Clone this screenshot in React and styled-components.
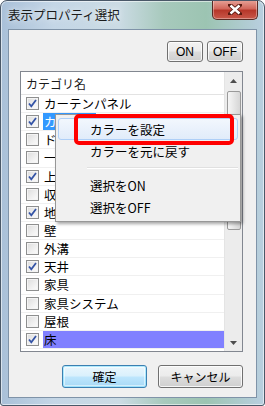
import React from "react";
import styled, { createGlobalStyle, css } from "styled-components";

const GlobalStyle = createGlobalStyle`
  body {
    margin: 0;
    background: #ffffff;
    font-family: "Noto Sans CJK JP", "Noto Sans", sans-serif;
    font-size: 12px;
    color: #000;
  }
`;

const items = [
  { name: "カーテンパネル", checked: true },
  { name: "カーテン", checked: true, selected: true },
  { name: "ドア", checked: false },
  { name: "一般", checked: false },
  { name: "上部", checked: true },
  { name: "収納", checked: false },
  { name: "地面", checked: true },
  { name: "壁", checked: false },
  { name: "外溝", checked: false },
  { name: "天井", checked: true },
  { name: "家具", checked: false },
  { name: "家具システム", checked: false },
  { name: "屋根", checked: false },
  { name: "床", checked: true, current: true },
];

const menuItems = [
  { label: "カラーを設定", hover: true },
  { label: "カラーを元に戻す" },
  { sep: true },
  { label: "選択をON" },
  { label: "選択をOFF" },
];

const Window = styled.div`
  position: relative;
  width: 265px;
  height: 406px;
  box-sizing: border-box;
  border: 1px solid #4a5868;
  border-radius: 7px 7px 3px 3px;
  background: linear-gradient(
      90deg,
      #a9c0d8 0%,
      #c4d6e6 20%,
      #cbdbe4 45%,
      #a7c9bc 62%,
      #9cc4b2 78%,
      #b9cfe0 100%
    );
  display: flex;
  flex-direction: column;
  overflow: hidden;
  box-shadow: inset 0 0 0 1px rgba(255, 255, 255, 0.55);
`;

const TitleBar = styled.div`
  height: 28px;
  display: flex;
  align-items: flex-start;
  padding-left: 7px;
`;

const Title = styled.span`
  margin-top: 7px;
  font-size: 12.5px;
  line-height: 14px;
  color: #1b1b1b;
  text-shadow: 0 0 6px rgba(255, 255, 255, 0.9);
`;

const CloseButton = styled.div`
  margin-left: auto;
  margin-right: 6px;
  margin-top: -1px;
  width: 46px;
  height: 20px;
  box-sizing: border-box;
  border: 1px solid #5a2a24;
  border-top: none;
  border-radius: 0 0 5px 5px;
  background: linear-gradient(180deg, #e8a59a 0%, #d2685c 45%, #b7372a 55%, #c9584a 100%);
  box-shadow: inset 0 0 0 1px rgba(255, 255, 255, 0.35);
  display: flex;
  align-items: center;
  justify-content: center;
`;

const Client = styled.div`
  flex: 1;
  margin: 0 7px 7px 7px;
  background: #f0f0f0;
  border: 1px solid #7f93a8;
  display: flex;
  flex-direction: column;
`;

const Toolbar = styled.div`
  display: flex;
  justify-content: flex-end;
  gap: 4px;
  padding: 11px 13px 0 0;
`;

const buttonBase = css`
  box-sizing: border-box;
  border: 1px solid #707070;
  border-radius: 3px;
  background: linear-gradient(180deg, #f2f2f2 0%, #ebebeb 49%, #dddddd 51%, #cfcfcf 100%);
  box-shadow: inset 0 0 0 1px rgba(255, 255, 255, 0.8);
  display: flex;
  align-items: center;
  justify-content: center;
  font-size: 12px;
  color: #000;
`;

const SmallButton = styled.div`
  ${buttonBase};
  width: 36px;
  height: 21px;
  font-family: "Liberation Sans", "Noto Sans CJK JP", sans-serif;
`;

const ListBox = styled.div`
  margin: 9px 13px 0 11px;
  height: 281px;
  box-sizing: border-box;
  border: 1px solid #828790;
  background: #fff;
  display: flex;
`;

const ListBody = styled.div`
  flex: 1;
  display: flex;
  flex-direction: column;
  overflow: hidden;
`;

const Header = styled.div`
  height: 23px;
  flex: 0 0 auto;
  box-sizing: border-box;
  border-bottom: 1px solid #e3e3e3;
  padding-left: 5px;
  display: flex;
  align-items: center;
  color: #1a1a1a;
`;

const Row = styled.div`
  height: 18.15px;
  flex: 0 0 auto;
  box-sizing: border-box;
  border-bottom: 1px solid #f0f0f0;
  display: flex;
  align-items: center;
  padding-left: 5px;
  gap: 4px;
`;

const Label = styled.span`
  flex: ${(p) => (p.$current ? 1 : "0 0 auto")};
  height: 17px;
  line-height: 17px;
  padding-left: 1px;
  padding-right: 2px;
  font-size: 12.5px;
  white-space: nowrap;
  background: ${(p) => (p.$current ? "#8080ff" : p.$selected ? "#3399ff" : "transparent")};
  color: ${(p) => (p.$selected ? "#fff" : "#000")};
`;

const Box = styled.span`
  width: 13px;
  height: 13px;
  box-sizing: border-box;
  border: 1px solid #8e8f8f;
  background: linear-gradient(135deg, #dcdcdc 0%, #f4f4f4 70%, #fbfbfb 100%);
  box-shadow: inset 0 0 0 1px #f4f4f4;
  display: flex;
  align-items: center;
  justify-content: center;
  flex: 0 0 auto;
`;

const Scrollbar = styled.div`
  width: 17px;
  background: #ececec;
  border-left: 1px solid #e4e4e4;
  display: flex;
  flex-direction: column;
  align-items: center;
`;

const Arrow = styled.div`
  height: 17px;
  width: 100%;
  display: flex;
  align-items: center;
  justify-content: center;
`;

const Thumb = styled.div`
  width: 14px;
  height: 139px;
  margin-top: 2px;
  box-sizing: border-box;
  border: 1px solid #9a9a9a;
  border-radius: 2px;
  background: linear-gradient(90deg, #f6f6f6 0%, #e6e6e6 50%, #d6d6d6 100%);
`;

const Spacer = styled.div`
  flex: 1;
`;

const Footer = styled.div`
  display: flex;
  justify-content: flex-end;
  gap: 11px;
  padding: 13px 13px 0 0;
`;

const DialogButton = styled.div`
  ${buttonBase};
  width: 85px;
  height: 23px;
  ${(p) =>
    p.$default &&
    css`
      border-color: #3c7fb1;
      background: linear-gradient(180deg, #eaf6fd 0%, #d9f0fc 49%, #bee6fd 51%, #a7d9f5 100%);
      box-shadow: inset 0 0 0 1px #48d1fd66, inset 0 0 0 2px rgba(255, 255, 255, 0.5);
    `}
`;

const Menu = styled.div`
  position: absolute;
  left: 54px;
  top: 113px;
  width: 186px;
  box-sizing: border-box;
  padding: 3px 2px 3px 2px;
  background: #f0f0f0;
  border: 1px solid #979797;
  box-shadow: 2px 2px 3px rgba(0, 0, 0, 0.35);
`;

const MenuItem = styled.div`
  height: 22px;
  box-sizing: border-box;
  padding-left: 31px;
  display: flex;
  align-items: center;
  font-size: 12.5px;
  border: 1px solid transparent;
  border-radius: 3px;
  ${(p) =>
    p.$hover &&
    css`
      border-color: #aecff7;
      background: linear-gradient(180deg, #f2f7fd 0%, #e1ecfa 100%);
    `}
`;

const Separator = styled.div`
  height: 1px;
  margin: 5px 0 5px 29px;
  background: #e0e0e0;
  border-bottom: 1px solid #ffffff;
`;

const Highlight = styled.div`
  position: absolute;
  left: 73px;
  top: 113px;
  width: 160px;
  height: 31px;
  box-sizing: border-box;
  border: 4px solid #ff0000;
  border-radius: 5px;
  pointer-events: none;
`;

const Check = () => (
  <svg width="9" height="9" viewBox="0 0 9 9">
    <path d="M1 4.5 L3.3 7.3 L8 1" fill="none" stroke="#3454a6" strokeWidth="1.8" />
  </svg>
);

const CloseIcon = () => (
  <svg width="14" height="11" viewBox="0 0 14 11">
    <path d="M2 1 L12 10 M12 1 L2 10" stroke="#5a1a10" strokeWidth="4.2" strokeLinecap="square" />
    <path d="M2.5 1.5 L11.5 9.5 M11.5 1.5 L2.5 9.5" stroke="#ffffff" strokeWidth="2.4" />
  </svg>
);

const Tri = ({ up }) => (
  <svg width="7" height="4" viewBox="0 0 7 4">
    <path d={up ? "M0 4 L3.5 0 L7 4 Z" : "M0 0 L3.5 4 L7 0 Z"} fill="#4d4d4d" />
  </svg>
);

export default function App() {
  return (
    <>
      <GlobalStyle />
      <Window>
        <TitleBar>
          <Title>表示プロパティ選択</Title>
          <CloseButton>
            <CloseIcon />
          </CloseButton>
        </TitleBar>
        <Client>
          <Toolbar>
            <SmallButton>ON</SmallButton>
            <SmallButton>OFF</SmallButton>
          </Toolbar>
          <ListBox>
            <ListBody>
              <Header>カテゴリ名</Header>
              {items.map((it) => (
                <Row key={it.name}>
                  <Box>{it.checked && <Check />}</Box>
                  <Label $selected={it.selected} $current={it.current}>
                    {it.name}
                  </Label>
                </Row>
              ))}
            </ListBody>
            <Scrollbar>
              <Arrow>
                <Tri up />
              </Arrow>
              <Thumb />
              <Spacer />
              <Arrow>
                <Tri />
              </Arrow>
            </Scrollbar>
          </ListBox>
          <Footer>
            <DialogButton $default>確定</DialogButton>
            <DialogButton>キャンセル</DialogButton>
          </Footer>
        </Client>
        <Menu>
          {menuItems.map((m, i) =>
            m.sep ? (
              <Separator key={i} />
            ) : (
              <MenuItem key={i} $hover={m.hover}>
                {m.label}
              </MenuItem>
            )
          )}
        </Menu>
        <Highlight />
      </Window>
    </>
  );
}
